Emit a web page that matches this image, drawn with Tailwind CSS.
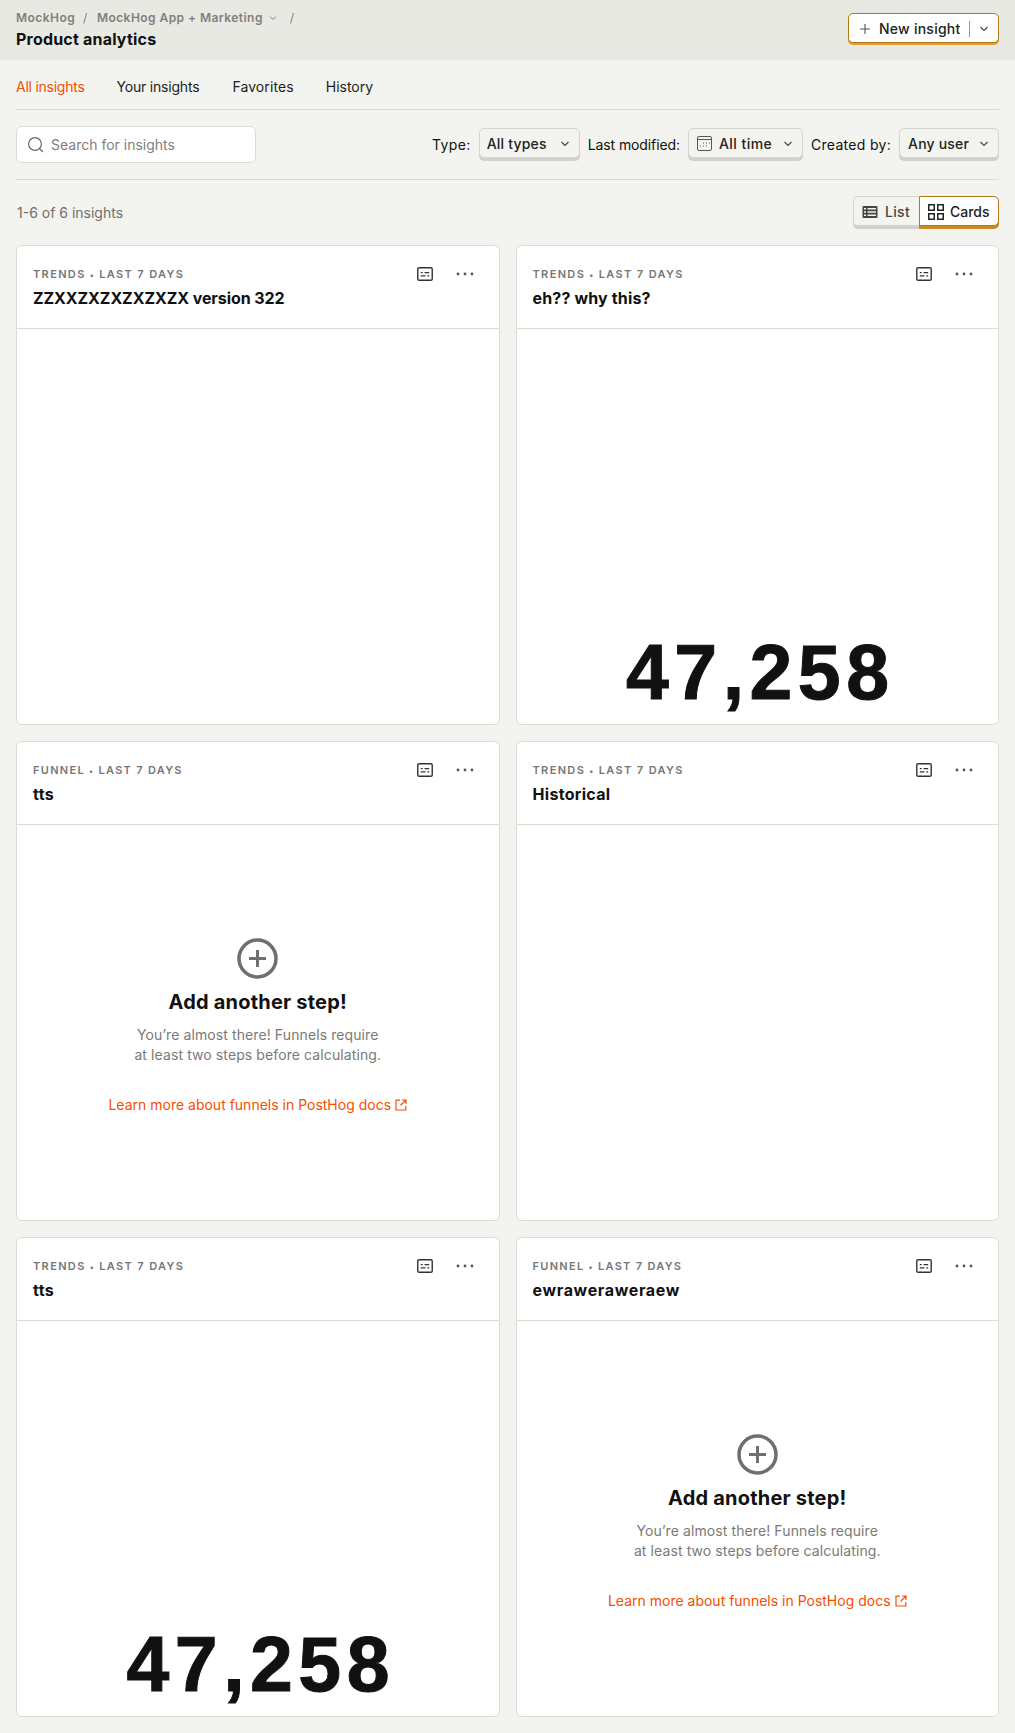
<!DOCTYPE html>
<html lang="en">
<head>
    <meta charset="UTF-8">
    <title>Product analytics</title>
    <script src="https://cdn.jsdelivr.net/npm/@tailwindcss/browser@4"></script>
</head>
<body class="bg-[#f3f4ef] font-['Inter',sans-serif] text-[#111] overflow-hidden">
    <!-- Top bar -->
    <header class="h-[60px] bg-[#e9e9e4] px-4 flex justify-between items-start">
        <div class="pt-[10px]">
            <div class="flex items-center h-[15px] text-xs font-semibold text-[#7f7f7b] leading-none tracking-[0.45px]">
                <span>MockHog</span><span class="ml-[8px] font-normal">/</span><span class="ml-[9px]">MockHog App + Marketing</span>
                <svg class="ml-[5px] w-[10px] h-[10px]" viewBox="0 0 10 10" fill="none" stroke="currentColor" stroke-width="1"><path d="M2 3.500 5 6.500 8 3.500"/></svg>
                <span class="ml-[12px] font-normal">/</span>
            </div>
            <h1 class="mt-[4px] text-base leading-[20px] font-bold tracking-[0.2px]">Product analytics</h1>
        </div>
        <button class="mt-[13px] h-[30px] w-[151px] flex items-center bg-white border border-[#b17816] rounded-[5px] shadow-[0_2px_0_#e49d26] text-sm font-medium text-[#222] pl-[10px] pt-px">
            <svg class="w-3 h-3 text-[#555]" viewBox="0 0 12 12" fill="none" stroke="currentColor" stroke-width="1.100"><path d="M6 1v10M1 6h10"/></svg>
            <span class="ml-[8px] tracking-[0.25px]">New insight</span>
            <span class="ml-[8px] w-px h-[16px] bg-[#999]"></span>
            <svg class="ml-[9px] w-[10px] h-[10px] text-[#444]" viewBox="0 0 10 10" fill="none" stroke="currentColor" stroke-width="1.100"><path d="M1.500 3 5 6.500 8.500 3"/></svg>
        </button>
    </header>

    <main class="px-4">
        <!-- Tabs -->
        <nav class="h-[50px] flex items-center gap-8 text-sm border-b border-[#d9d9d3] pt-[5px] text-[#1d1d1b]">
            <a class="text-[#f54e00] tracking-[-0.25px]">All insights</a>
            <a class="tracking-[-0.2px]">Your insights</a>
            <a class="ml-px tracking-[0.1px]">Favorites</a>
            <a>History</a>
        </nav>

        <!-- Filters -->
        <div class="h-[70px] flex justify-between items-start border-b border-[#d9d9d3] text-sm">
            <div class="w-[240px] h-[37px] mt-[16px] bg-white border border-[#dcdcd6] rounded-[6px] flex items-center pl-[10px] text-[#7f7f7b]">
                <svg class="w-[17px] h-[17px] text-[#666]" viewBox="0 0 17 17" fill="none" stroke="currentColor" stroke-width="1.200"><circle cx="8" cy="8" r="6.400"/><path d="M12.600 12.600 16 16"/></svg>
                <span class="ml-[7px]">Search for insights</span>
            </div>
            <div class="flex items-start mt-[18px]">
                <span class="mt-[7px] tracking-[0.4px]">Type:</span>
                <button class="ml-[8px] h-[30px] pl-[7px] pr-[8px] pt-px w-[101px] flex items-center justify-between bg-[#f3f4ef] border border-[#d5d5d0] rounded-[5px] shadow-[0_3px_0_#d2d0cd] font-medium text-[#222]">
                    <span class="tracking-[0.2px]">All types</span>
                    <svg class="w-[10px] h-[10px] mr-[1px] text-[#444]" viewBox="0 0 10 10" fill="none" stroke="currentColor" stroke-width="1.100"><path d="M1.500 3 5 6.500 8.500 3"/></svg>
                </button>
                <span class="ml-[8px] mt-[7px] tracking-[-0.1px]">Last modified:</span>
                <button class="ml-[8px] h-[30px] px-[8px] pt-px w-[115px] flex items-center bg-[#f3f4ef] border border-[#d5d5d0] rounded-[5px] shadow-[0_3px_0_#d2d0cd] font-medium text-[#222]">
                    <svg class="w-[15px] h-[15px] text-[#555]" viewBox="0 0 15 15" fill="none" stroke="currentColor"><rect x="0.500" y="0.500" width="14" height="14" rx="1.500"/><path d="M0.500 3.500h14"/><path d="M6 7h1M9 7h1M12 7h1M3 10h1M6 10h1M9 10h1" stroke-width="1"/></svg>
                    <span class="ml-[7px] tracking-[0.45px]">All time</span>
                    <svg class="ml-auto w-[10px] h-[10px] mr-[1px] text-[#444]" viewBox="0 0 10 10" fill="none" stroke="currentColor" stroke-width="1.100"><path d="M1.500 3 5 6.500 8.500 3"/></svg>
                </button>
                <span class="ml-[8px] mt-[7px] tracking-[0.3px]">Created by:</span>
                <button class="ml-[8px] h-[30px] px-[8px] pt-px w-[100px] flex items-center justify-between bg-[#f3f4ef] border border-[#d5d5d0] rounded-[5px] shadow-[0_3px_0_#d2d0cd] font-medium text-[#222]">
                    <span class="tracking-[0.2px]">Any user</span>
                    <svg class="w-[10px] h-[10px] mr-[1px] text-[#444]" viewBox="0 0 10 10" fill="none" stroke="currentColor" stroke-width="1.100"><path d="M1.500 3 5 6.500 8.500 3"/></svg>
                </button>
            </div>
        </div>

        <!-- Count + view toggle -->
        <div class="h-[65px] flex justify-between items-start text-sm">
            <span class="text-[#6f6f6b] ml-[1px] mt-[23px]">1-6 of 6 insights</span>
            <div class="flex text-sm font-medium mt-[16px]">
                <div class="h-[30px] w-[66px] flex items-center pl-[8px] pt-px border border-r-0 border-[#d5d5d0] rounded-l-[5px] shadow-[0_3px_0_#d2d0cd] text-[#444]">
                    <svg class="w-4 h-[14px]" viewBox="0 0 16 14" fill="currentColor"><path fill-rule="evenodd" d="M1.500 1h13a1 1 0 0 1 1 1v10a1 1 0 0 1-1 1h-13a1 1 0 0 1-1-1V2a1 1 0 0 1 1-1ZM2 3v1.500h2V3Zm3.500 0v1.500H14V3ZM2 6.200v1.500h2V6.200Zm3.500 0v1.500H14V6.200ZM2 9.500V11h2V9.500Zm3.500 0V11H14V9.500Z"/></svg>
                    <span class="ml-[7px] tracking-[0.3px]">List</span>
                </div>
                <div class="h-[30px] w-[80px] flex items-center pl-[8px] pt-px bg-white border border-[#b17816] rounded-r-[5px] shadow-[0_3px_0_#c98b20] text-[#222]">
                    <svg class="w-4 h-4" viewBox="0 0 16 16" fill="none" stroke="#222" stroke-width="1.500"><rect x="0.750" y="0.750" width="5.500" height="5.500"/><rect x="9.750" y="0.750" width="5.500" height="5.500"/><rect x="0.750" y="9.750" width="5.500" height="5.500"/><rect x="9.750" y="9.750" width="5.500" height="5.500"/></svg>
                    <span class="ml-[6px]">Cards</span>
                </div>
            </div>
        </div>

        <!-- Cards -->
        <div class="grid grid-cols-2 gap-4">
            <!-- 1 -->
            <section class="h-[480px] bg-white border border-[#dcdcd6] rounded-[6px] flex flex-col overflow-hidden">
                <div class="h-[83px] shrink-0 border-b border-[#dcdcd6] px-4 pt-[23px] relative">
                    <div class="text-[11px] leading-[11px] font-semibold tracking-[1.35px] text-[#777]">TRENDS <span class="text-[8px]">•</span> LAST 7 DAYS</div>
                    <h2 class="mt-[6px] text-base leading-[22px] font-bold tracking-[-0.08px]">ZZXXZXZXZXZXZX version 322</h2>
                    <svg class="absolute right-[66px] top-[21px] w-[16px] h-[14px] text-[#333]" viewBox="0 0 17 15" fill="none" stroke="currentColor"><rect x="0.750" y="0.750" width="15.500" height="13.500" rx="1.500" stroke-width="1.500"/><path d="M4 6h2M8 6h5M4 9.500h5M11 9.500h2" stroke-width="1.300"/></svg>
                    <svg class="absolute right-[25px] top-[26px] w-[18px] h-[4px] text-[#555]" viewBox="0 0 18 4" fill="currentColor"><circle cx="2" cy="2" r="1.400"/><circle cx="9" cy="2" r="1.400"/><circle cx="16" cy="2" r="1.400"/></svg>
                </div>
            </section>
            <!-- 2 -->
            <section class="h-[480px] bg-white border border-[#dcdcd6] rounded-[6px] flex flex-col overflow-hidden">
                <div class="h-[83px] shrink-0 border-b border-[#dcdcd6] px-4 pt-[23px] relative">
                    <div class="text-[11px] leading-[11px] font-semibold tracking-[1.35px] text-[#777]">TRENDS <span class="text-[8px]">•</span> LAST 7 DAYS</div>
                    <h2 class="mt-[6px] text-base leading-[22px] font-bold tracking-[0.15px]">eh?? why this?</h2>
                    <svg class="absolute right-[66px] top-[21px] w-[16px] h-[14px] text-[#333]" viewBox="0 0 17 15" fill="none" stroke="currentColor"><rect x="0.750" y="0.750" width="15.500" height="13.500" rx="1.500" stroke-width="1.500"/><path d="M4 6h2M8 6h5M4 9.500h5M11 9.500h2" stroke-width="1.300"/></svg>
                    <svg class="absolute right-[25px] top-[26px] w-[18px] h-[4px] text-[#555]" viewBox="0 0 18 4" fill="currentColor"><circle cx="2" cy="2" r="1.400"/><circle cx="9" cy="2" r="1.400"/><circle cx="16" cy="2" r="1.400"/></svg>
                </div>
                <div class="flex-1 flex items-end justify-center pb-[4px] pl-[6px]">
                    <span class="font-['Liberation_Sans',sans-serif] font-bold text-[77px] leading-[96px] tracking-[5.5px] [-webkit-text-stroke:1px_#111]">47,258</span>
                </div>
            </section>
            <!-- 3 -->
            <section class="h-[480px] bg-white border border-[#dcdcd6] rounded-[6px] flex flex-col overflow-hidden">
                <div class="h-[83px] shrink-0 border-b border-[#dcdcd6] px-4 pt-[23px] relative">
                    <div class="text-[11px] leading-[11px] font-semibold tracking-[1.3px] text-[#777]">FUNNEL <span class="text-[8px]">•</span> LAST 7 DAYS</div>
                    <h2 class="mt-[6px] text-base leading-[22px] font-bold tracking-[0.4px]">tts</h2>
                    <svg class="absolute right-[66px] top-[21px] w-[16px] h-[14px] text-[#333]" viewBox="0 0 17 15" fill="none" stroke="currentColor"><rect x="0.750" y="0.750" width="15.500" height="13.500" rx="1.500" stroke-width="1.500"/><path d="M4 6h2M8 6h5M4 9.500h5M11 9.500h2" stroke-width="1.300"/></svg>
                    <svg class="absolute right-[25px] top-[26px] w-[18px] h-[4px] text-[#555]" viewBox="0 0 18 4" fill="currentColor"><circle cx="2" cy="2" r="1.400"/><circle cx="9" cy="2" r="1.400"/><circle cx="16" cy="2" r="1.400"/></svg>
                </div>
                <div class="flex-1 flex flex-col items-center pt-[113px]">
                    <svg class="w-[41px] h-[41px] text-[#6f6f6b]" viewBox="0 0 41 41" fill="none" stroke="currentColor"><circle cx="20.500" cy="20.500" r="18.500" stroke-width="3.500"/><path d="M20.500 12v17M12 20.500h17" stroke-width="3"/></svg>
                    <h3 class="mt-[9px] text-xl leading-[28px] font-bold tracking-[0.2px]">Add another step!</h3>
                    <p class="mt-[9px] text-sm leading-[20px] text-center text-[#7a7a76] tracking-[0.1px]">You’re almost there! Funnels require<br>at least two steps before calculating.</p>
                    <a class="mt-[30px] text-sm leading-[20px] text-[#f54e00] flex items-center">Learn more about funnels in PostHog docs
                        <svg class="ml-[4px] w-[12px] h-[12px]" viewBox="0 0 12 12" fill="none" stroke="currentColor" stroke-width="1.200"><path d="M5 1.200H1v9.800h9.800V7M7 1h4v4M11 1 5.500 6.500"/></svg>
                    </a>
                </div>
            </section>
            <!-- 4 -->
            <section class="h-[480px] bg-white border border-[#dcdcd6] rounded-[6px] flex flex-col overflow-hidden">
                <div class="h-[83px] shrink-0 border-b border-[#dcdcd6] px-4 pt-[23px] relative">
                    <div class="text-[11px] leading-[11px] font-semibold tracking-[1.35px] text-[#777]">TRENDS <span class="text-[8px]">•</span> LAST 7 DAYS</div>
                    <h2 class="mt-[6px] text-base leading-[22px] font-bold tracking-[0.3px]">Historical</h2>
                    <svg class="absolute right-[66px] top-[21px] w-[16px] h-[14px] text-[#333]" viewBox="0 0 17 15" fill="none" stroke="currentColor"><rect x="0.750" y="0.750" width="15.500" height="13.500" rx="1.500" stroke-width="1.500"/><path d="M4 6h2M8 6h5M4 9.500h5M11 9.500h2" stroke-width="1.300"/></svg>
                    <svg class="absolute right-[25px] top-[26px] w-[18px] h-[4px] text-[#555]" viewBox="0 0 18 4" fill="currentColor"><circle cx="2" cy="2" r="1.400"/><circle cx="9" cy="2" r="1.400"/><circle cx="16" cy="2" r="1.400"/></svg>
                </div>
            </section>
            <!-- 5 -->
            <section class="h-[480px] bg-white border border-[#dcdcd6] rounded-[6px] flex flex-col overflow-hidden">
                <div class="h-[83px] shrink-0 border-b border-[#dcdcd6] px-4 pt-[23px] relative">
                    <div class="text-[11px] leading-[11px] font-semibold tracking-[1.35px] text-[#777]">TRENDS <span class="text-[8px]">•</span> LAST 7 DAYS</div>
                    <h2 class="mt-[6px] text-base leading-[22px] font-bold tracking-[0.4px]">tts</h2>
                    <svg class="absolute right-[66px] top-[21px] w-[16px] h-[14px] text-[#333]" viewBox="0 0 17 15" fill="none" stroke="currentColor"><rect x="0.750" y="0.750" width="15.500" height="13.500" rx="1.500" stroke-width="1.500"/><path d="M4 6h2M8 6h5M4 9.500h5M11 9.500h2" stroke-width="1.300"/></svg>
                    <svg class="absolute right-[25px] top-[26px] w-[18px] h-[4px] text-[#555]" viewBox="0 0 18 4" fill="currentColor"><circle cx="2" cy="2" r="1.400"/><circle cx="9" cy="2" r="1.400"/><circle cx="16" cy="2" r="1.400"/></svg>
                </div>
                <div class="flex-1 flex items-end justify-center pb-[4px] pl-[6px]">
                    <span class="font-['Liberation_Sans',sans-serif] font-bold text-[77px] leading-[96px] tracking-[5.5px] [-webkit-text-stroke:1px_#111]">47,258</span>
                </div>
            </section>
            <!-- 6 -->
            <section class="h-[480px] bg-white border border-[#dcdcd6] rounded-[6px] flex flex-col overflow-hidden">
                <div class="h-[83px] shrink-0 border-b border-[#dcdcd6] px-4 pt-[23px] relative">
                    <div class="text-[11px] leading-[11px] font-semibold tracking-[1.3px] text-[#777]">FUNNEL <span class="text-[8px]">•</span> LAST 7 DAYS</div>
                    <h2 class="mt-[6px] text-base leading-[22px] font-bold tracking-[0.65px]">ewraweraweraew</h2>
                    <svg class="absolute right-[66px] top-[21px] w-[16px] h-[14px] text-[#333]" viewBox="0 0 17 15" fill="none" stroke="currentColor"><rect x="0.750" y="0.750" width="15.500" height="13.500" rx="1.500" stroke-width="1.500"/><path d="M4 6h2M8 6h5M4 9.500h5M11 9.500h2" stroke-width="1.300"/></svg>
                    <svg class="absolute right-[25px] top-[26px] w-[18px] h-[4px] text-[#555]" viewBox="0 0 18 4" fill="currentColor"><circle cx="2" cy="2" r="1.400"/><circle cx="9" cy="2" r="1.400"/><circle cx="16" cy="2" r="1.400"/></svg>
                </div>
                <div class="flex-1 flex flex-col items-center pt-[113px]">
                    <svg class="w-[41px] h-[41px] text-[#6f6f6b]" viewBox="0 0 41 41" fill="none" stroke="currentColor"><circle cx="20.500" cy="20.500" r="18.500" stroke-width="3.500"/><path d="M20.500 12v17M12 20.500h17" stroke-width="3"/></svg>
                    <h3 class="mt-[9px] text-xl leading-[28px] font-bold tracking-[0.2px]">Add another step!</h3>
                    <p class="mt-[9px] text-sm leading-[20px] text-center text-[#7a7a76] tracking-[0.1px]">You’re almost there! Funnels require<br>at least two steps before calculating.</p>
                    <a class="mt-[30px] text-sm leading-[20px] text-[#f54e00] flex items-center">Learn more about funnels in PostHog docs
                        <svg class="ml-[4px] w-[12px] h-[12px]" viewBox="0 0 12 12" fill="none" stroke="currentColor" stroke-width="1.200"><path d="M5 1.200H1v9.800h9.800V7M7 1h4v4M11 1 5.500 6.500"/></svg>
                    </a>
                </div>
            </section>
        </div>
    </main>
</body>
</html>
